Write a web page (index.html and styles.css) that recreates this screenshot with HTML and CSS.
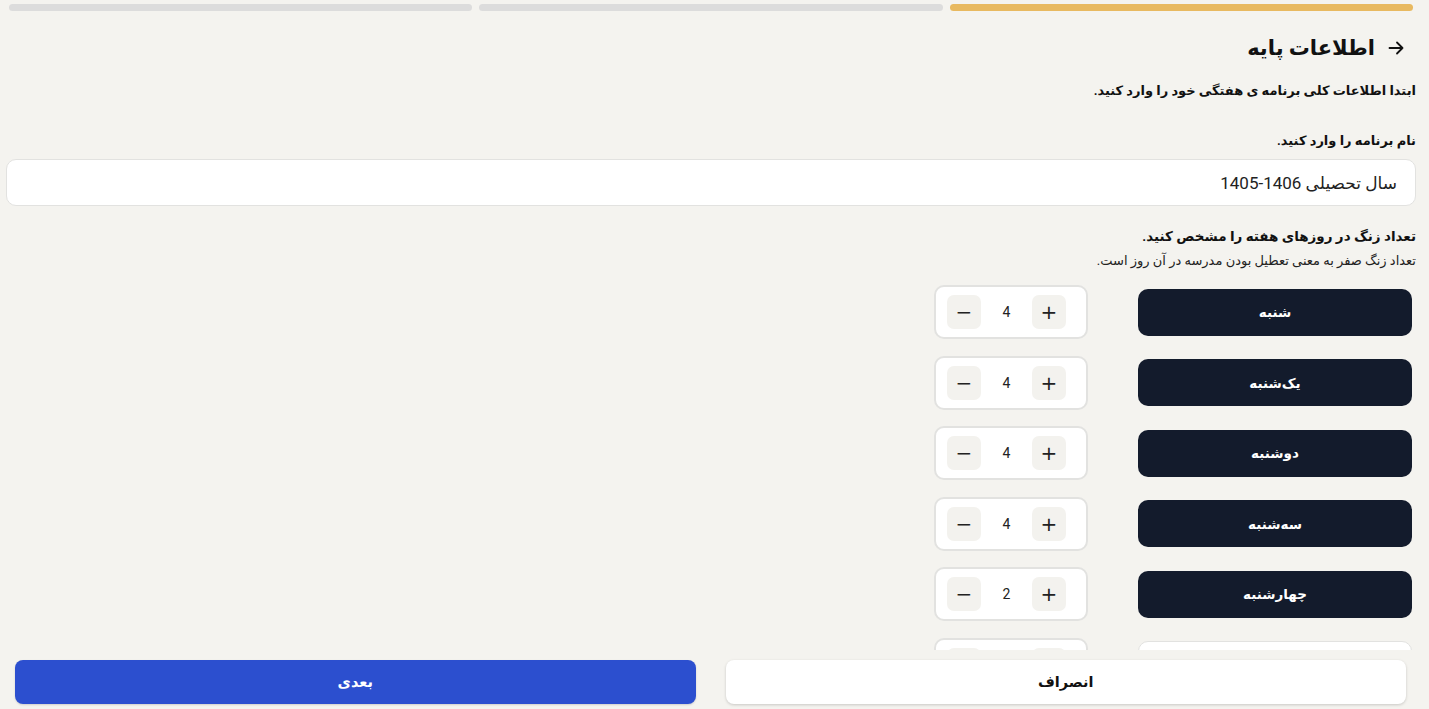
FILE: index.html
```html
<!DOCTYPE html>
<html lang="fa" dir="rtl">
<head>
<meta charset="utf-8">
<title>اطلاعات پایه</title>
<link rel="stylesheet" href="styles.css">
</head>
<body>
<div class="app">
<main class="page">
  <div class="progress">
    <span class="bar bar-active"></span>
    <span class="bar"></span>
    <span class="bar"></span>
  </div>

  <h1 class="title">
    <svg class="arrow" width="18" height="18" viewBox="0 0 18 18" fill="none" stroke="#111" stroke-width="1.8" stroke-linecap="round" stroke-linejoin="round"><path d="M2.5 9h13M10 3.5 15.5 9 10 14.5"/></svg>
    <span>اطلاعات پایه</span>
  </h1>
  <p class="intro">ابتدا اطلاعات کلی برنامه ی هفتگی خود را وارد کنید.</p>

  <label class="label" for="name">نام برنامه را وارد کنید.</label>
  <input id="name" class="text-input" type="text" value="سال تحصیلی 1406-1405">

  <h2 class="section">تعداد زنگ در روزهای هفته را مشخص کنید.</h2>
  <p class="hint">تعداد زنگ صفر به معنی تعطیل بودن مدرسه در آن روز است.</p>

  <div class="days">
    <div class="day-row"><div class="day">شنبه</div><div class="stepper"><button class="step">+</button><span class="val">4</span><button class="step">−</button></div></div>
    <div class="day-row"><div class="day">یک‌شنبه</div><div class="stepper"><button class="step">+</button><span class="val">4</span><button class="step">−</button></div></div>
    <div class="day-row"><div class="day">دوشنبه</div><div class="stepper"><button class="step">+</button><span class="val">4</span><button class="step">−</button></div></div>
    <div class="day-row"><div class="day">سه‌شنبه</div><div class="stepper"><button class="step">+</button><span class="val">4</span><button class="step">−</button></div></div>
    <div class="day-row"><div class="day">چهارشنبه</div><div class="stepper"><button class="step">+</button><span class="val">2</span><button class="step">−</button></div></div>
    <div class="day-row"><div class="day day-off">پنج‌شنبه</div><div class="stepper"><button class="step">+</button><span class="val">0</span><button class="step">−</button></div></div>
    <div class="day-row"><div class="day day-off">جمعه</div><div class="stepper"><button class="step">+</button><span class="val">0</span><button class="step">−</button></div></div>
  </div>
</main>

<footer class="footer">
  <button class="btn btn-cancel">انصراف</button>
  <button class="btn btn-next">بعدی</button>
</footer>
</div>
</body>
</html>
```

FILE: styles.css
```css
* { box-sizing: border-box; }

html, body {
  margin: 0;
  height: 100%;
  background: #f4f3ef;
  color: #111;
  font-family: Roboto, "DejaVu Sans", sans-serif;
}

.app {
  height: 100vh;
  display: flex;
  flex-direction: column;
}

.page {
  flex: 1;
  min-height: 0;
  overflow-y: auto;
  scrollbar-width: none;
  padding: 4px 13px 24px 6px;
}

.progress {
  display: flex;
  gap: 7px;
  margin: 0 3px;
}

.bar {
  flex: 1;
  height: 7px;
  border-radius: 4px;
  background: #dcdcdc;
}

.bar-active { background: #e8b960; }

.title {
  display: flex;
  align-items: center;
  gap: 12px;
  margin: 22px 11px 0 0;
  font-size: 21px;
  font-weight: 700;
  line-height: 30px;
}

.intro {
  margin: 18px 0 0;
  font-size: 13px;
  font-weight: 700;
  line-height: 20px;
}

.label {
  display: block;
  margin-top: 30px;
  font-size: 13px;
  font-weight: 700;
  line-height: 20px;
}

.text-input {
  display: block;
  width: 100%;
  height: 47px;
  margin-top: 8px;
  padding: 0 18px;
  border: 1px solid #e2e2e0;
  border-radius: 10px;
  background: #fff;
  font-family: Roboto, "DejaVu Sans", sans-serif;
  font-size: 17px;
  color: #222;
  outline: none;
}

.section {
  margin: 19px 0 0;
  font-size: 13.5px;
  font-weight: 700;
  line-height: 22px;
}

.hint {
  margin: 5px 0 0;
  font-size: 13px;
  line-height: 18px;
  color: #222;
}

.days {
  display: flex;
  flex-direction: column;
  gap: 16.5px;
  margin: 15px 4px 0 0;
}

.day-row {
  display: flex;
  align-items: center;
  gap: 50px;
}

.day {
  width: 274px;
  height: 47px;
  display: flex;
  align-items: center;
  justify-content: center;
  border-radius: 10px;
  background: #131b2c;
  color: #fff;
  font-size: 13.5px;
  font-weight: 700;
}

.day-off {
  background: #fff;
  color: #111;
  border: 1px solid #e2e2e0;
}

.stepper {
  width: 154px;
  height: 54px;
  display: flex;
  align-items: center;
  justify-content: flex-end;
  padding: 0 11px;
  border: 2px solid #e2e2e0;
  border-radius: 10px;
  background: #fff;
}

.step {
  width: 34px;
  height: 34px;
  border: 0;
  border-radius: 7px;
  background: #f3f2ee;
  font-family: "DejaVu Sans", sans-serif;
  font-size: 20px;
  line-height: 1;
  color: #222;
  padding: 0;
}

.val {
  width: 51px;
  text-align: center;
  font-size: 14px;
  color: #222;
}

.footer {
  flex: none;
  height: 59px;
  display: flex;
  gap: 30px;
  padding: 10px 23px 5px 15px;
  background: #f4f3ef;
}

.btn {
  flex: 1;
  height: 44px;
  border: 0;
  border-radius: 8px;
  font-family: Roboto, "DejaVu Sans", sans-serif;
  font-size: 14.5px;
  font-weight: 700;
}

.btn-cancel {
  background: #fff;
  color: #111;
  box-shadow: 0 1px 3px rgba(0,0,0,0.18);
}

.btn-next {
  background: #2c4fcf;
  color: #fff;
  box-shadow: 0 1px 2px rgba(0,0,0,0.15);
}
```
